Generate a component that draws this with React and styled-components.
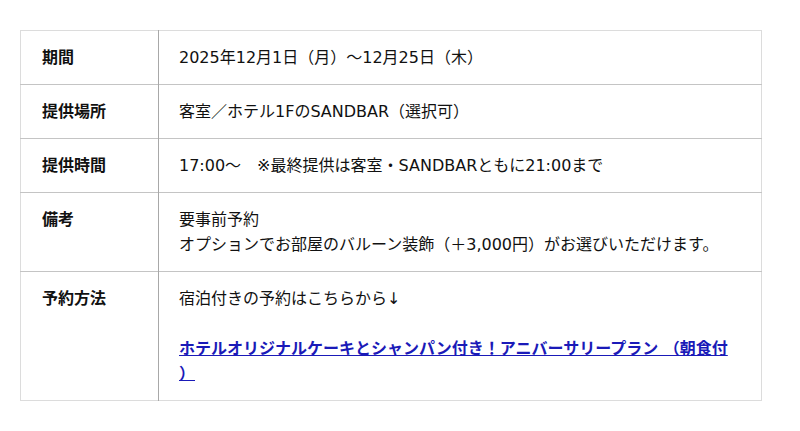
import React from 'react';
import styled, { createGlobalStyle } from 'styled-components';

const GlobalStyle = createGlobalStyle`
  body {
    margin: 0;
    background: #fff;
    font-family: 'DejaVu Sans', 'Noto Sans CJK JP', sans-serif;
    color: #111;
  }
`;

const Page = styled.div`
  padding: 30px 38px 30px 20px;
`;

const Table = styled.table`
  width: 742px;
  table-layout: fixed;
  border-collapse: collapse;
  border: 1px solid #dcdcdc;
  font-size: 16px;
  line-height: 25px;
`;

const Row = styled.tr`
  border-bottom: 1px solid ${(p) => (p.$last ? '#dcdcdc' : '#c4c4c4')};
`;

const Label = styled.th`
  width: 138px;
  box-sizing: border-box;
  padding: 14px 10px 14px 21px;
  text-align: left;
  vertical-align: top;
  font-weight: 700;
  border-right: 1px solid #a8a8a8;
`;

const Value = styled.td`
  padding: 14px 26px 14px 20px;
  vertical-align: top;
`;

const Spacer = styled.div`
  height: 25px;
`;

const PlanLink = styled.a`
  color: #1a1ab8;
  font-weight: 700;
  text-decoration: underline;
  line-break: anywhere;
  text-spacing-trim: space-all;
`;

const rows = [
  { label: '期間', value: '2025年12月1日（月）～12月25日（木）' },
  { label: '提供場所', value: '客室／ホテル1FのSANDBAR（選択可）' },
  { label: '提供時間', value: '17:00～　※最終提供は客室・SANDBARともに21:00まで' },
  {
    label: '備考',
    value: (
      <>
        要事前予約
        <br />
        オプションでお部屋のバルーン装飾（＋3,000円）がお選びいただけます。
      </>
    ),
  },
  {
    label: '予約方法',
    value: (
      <>
        宿泊付きの予約はこちらから↓
        <Spacer />
        <PlanLink href="#">
          ホテルオリジナルケーキとシャンパン付き！アニバーサリープラン （朝食付）
        </PlanLink>
      </>
    ),
  },
];

export default function App() {
  return (
    <Page>
      <GlobalStyle />
      <Table>
        <tbody>
          {rows.map((r, i) => (
            <Row key={r.label} $last={i === rows.length - 1}>
              <Label>{r.label}</Label>
              <Value>{r.value}</Value>
            </Row>
          ))}
        </tbody>
      </Table>
    </Page>
  );
}
